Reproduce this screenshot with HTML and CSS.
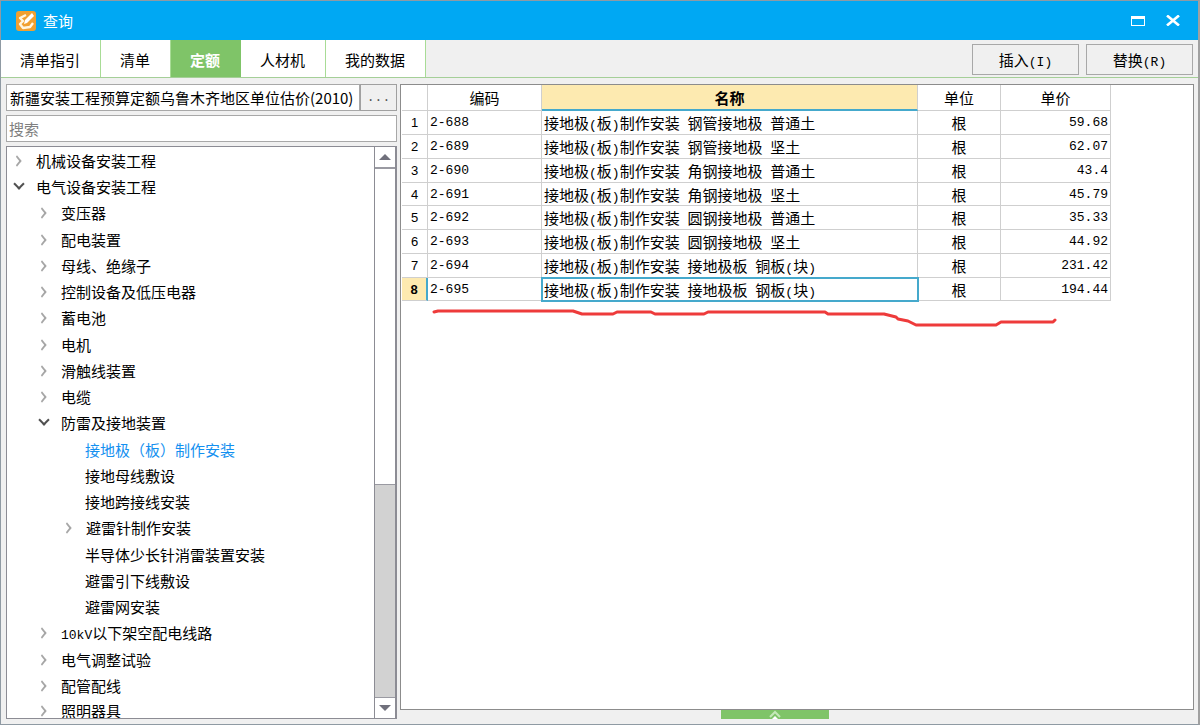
FILE: index.html
```html
<!DOCTYPE html>
<html lang="zh-CN">
<head>
<meta charset="utf-8">
<title>查询</title>
<link rel="stylesheet" href="styles.css">
</head>
<body>
<div class="window">
  <header class="titlebar">
    <svg class="logo" viewBox="0 0 20 20" aria-hidden="true">
      <rect width="20" height="20" rx="3" fill="#f0a030"/>
      <path d="M10 4L4 7l3 3-3 3 3 4 7-1 3-4" fill="none" stroke="#fff6e0" stroke-width="2.400" stroke-linejoin="round"/>
      <path d="M8 13l1-4 7-7 2 3-7 7z" fill="#fff"/>
    </svg>
    <h1 class="title">查询</h1>
    <button class="winbtn" aria-label="最大化"><svg width="14" height="10" viewBox="0 0 14 10"><path d="M0 0h14v10H0zM1 3v6h12V3z" fill="#fff" fill-rule="evenodd"/></svg></button>
    <button class="winbtn" aria-label="关闭"><svg width="14" height="11" viewBox="0 0 14 11"><path d="M1 .500l12 10M13 .500l-12 10" stroke="#fff" stroke-width="2.600"/></svg></button>
  </header>
  <nav class="tabs">
    <button class="tab">清单指引</button>
    <button class="tab">清单</button>
    <button class="tab active">定额</button>
    <button class="tab">人材机</button>
    <button class="tab wide">我的数据</button>
    <div class="actions">
      <button class="action">插入<span class="mono">(I)</span></button>
      <button class="action">替换<span class="mono">(R)</span></button>
    </div>
  </nav>
  <main class="content">
    <aside class="side">
      <div class="library">
        <input class="field" type="text" readonly aria-label="定额库" value="新疆安装工程预算定额乌鲁木齐地区单位估价(2010)">
        <button class="browse mono" aria-label="选择定额库">...</button>
      </div>
      <input class="search" type="text" placeholder="搜索" aria-label="搜索">
      <div class="treebox">
        <ul class="tree">
          <li class="closed">机械设备安装工程</li>
          <li class="open">电气设备安装工程</li>
          <li class="l2 closed">变压器</li>
          <li class="l2 closed">配电装置</li>
          <li class="l2 closed">母线、绝缘子</li>
          <li class="l2 closed">控制设备及低压电器</li>
          <li class="l2 closed">蓄电池</li>
          <li class="l2 closed">电机</li>
          <li class="l2 closed">滑触线装置</li>
          <li class="l2 closed">电缆</li>
          <li class="l2 open">防雷及接地装置</li>
          <li class="l3 current">接地极（板）制作安装</li>
          <li class="l3">接地母线敷设</li>
          <li class="l3">接地跨接线安装</li>
          <li class="l3 closed">避雷针制作安装</li>
          <li class="l3">半导体少长针消雷装置安装</li>
          <li class="l3">避雷引下线敷设</li>
          <li class="l3">避雷网安装</li>
          <li class="l2 closed"><span><span class="mono">10kV</span>以下架空配电线路</span></li>
          <li class="l2 closed">电气调整试验</li>
          <li class="l2 closed">配管配线</li>
          <li class="l2 closed">照明器具</li>
        </ul>
        <div class="scroll">
          <button class="arrow" aria-label="向上滚动"><svg width="12" height="6" viewBox="0 0 12 6"><path d="M0 6l6-6 6 6z" fill="#70707c"/></svg></button>
          <div class="track"><div class="thumb"></div></div>
          <button class="arrow down" aria-label="向下滚动"><svg width="12" height="6" viewBox="0 0 12 6"><path d="M0 0l6 6 6-6z" fill="#70707c"/></svg></button>
        </div>
      </div>
    </aside>
    <section class="right">
      <div class="gridbox">
        <table class="grid">
          <colgroup><col class="c-no"><col class="c-code"><col class="c-name"><col class="c-unit"><col class="c-price"></colgroup>
          <thead>
            <tr><th></th><th>编码</th><th class="sorted">名称</th><th>单位</th><th>单价</th></tr>
          </thead>
          <tbody>
            <tr><th>1</th><td class="mono">2-688</td><td>接地极<span class="mono">(</span>板<span class="mono">)</span>制作安装<span class="mono"> </span>钢管接地极<span class="mono"> </span>普通土</td><td class="unit">根</td><td class="price mono">59.68</td></tr>
            <tr><th>2</th><td class="mono">2-689</td><td>接地极<span class="mono">(</span>板<span class="mono">)</span>制作安装<span class="mono"> </span>钢管接地极<span class="mono"> </span>坚土</td><td class="unit">根</td><td class="price mono">62.07</td></tr>
            <tr><th>3</th><td class="mono">2-690</td><td>接地极<span class="mono">(</span>板<span class="mono">)</span>制作安装<span class="mono"> </span>角钢接地极<span class="mono"> </span>普通土</td><td class="unit">根</td><td class="price mono">43.4</td></tr>
            <tr><th>4</th><td class="mono">2-691</td><td>接地极<span class="mono">(</span>板<span class="mono">)</span>制作安装<span class="mono"> </span>角钢接地极<span class="mono"> </span>坚土</td><td class="unit">根</td><td class="price mono">45.79</td></tr>
            <tr><th>5</th><td class="mono">2-692</td><td>接地极<span class="mono">(</span>板<span class="mono">)</span>制作安装<span class="mono"> </span>圆钢接地极<span class="mono"> </span>普通土</td><td class="unit">根</td><td class="price mono">35.33</td></tr>
            <tr><th>6</th><td class="mono">2-693</td><td>接地极<span class="mono">(</span>板<span class="mono">)</span>制作安装<span class="mono"> </span>圆钢接地极<span class="mono"> </span>坚土</td><td class="unit">根</td><td class="price mono">44.92</td></tr>
            <tr><th>7</th><td class="mono">2-694</td><td>接地极<span class="mono">(</span>板<span class="mono">)</span>制作安装<span class="mono"> </span>接地极板<span class="mono"> </span>铜板<span class="mono">(</span>块<span class="mono">)</span></td><td class="unit">根</td><td class="price mono">231.42</td></tr>
            <tr class="selected"><th>8</th><td class="mono">2-695</td><td class="cell">接地极<span class="mono">(</span>板<span class="mono">)</span>制作安装<span class="mono"> </span>接地极板<span class="mono"> </span>钢板<span class="mono">(</span>块<span class="mono">)</span></td><td class="unit">根</td><td class="price mono">194.44</td></tr>
          </tbody>
        </table>
        <svg class="stroke" width="630" height="20" viewBox="430 308 630 20" aria-hidden="true">
          <path d="M434 312l4-1h135l9 3h31l4-2h34l4 2h49l4-2h117l3 2h56l12 3 2 2 10 2 8 4h80l5-3h52l2-2" fill="none" stroke="#ee3b3b" stroke-width="3" stroke-linecap="round" stroke-linejoin="round"/>
        </svg>
      </div>
      <button class="expand" aria-label="展开"><svg width="12" height="9" viewBox="0 0 12 9"><path d="M1 7l5-5 5 5" fill="none" stroke="#c5e8b8" stroke-width="2"/><path d="M3 9l3-3 3 3z" fill="#fff"/></svg></button>
    </section>
  </main>
</div>
</body>
</html>
```
FILE: styles.css
```css
*, *::before { box-sizing: border-box; }

body {
  margin: 0;
  font: 15px/20px "Noto Sans CJK SC", sans-serif;
  color: #000;
}

button, input {
  font: inherit;
  color: inherit;
  margin: 0;
  padding: 0;
  border-radius: 0;
}

.mono {
  font-family: "Liberation Mono", "Noto Sans CJK SC", monospace;
  font-size: 13px;
  white-space: pre;
}
span.mono { line-height: 1; }

.window {
  display: flex;
  flex-direction: column;
  height: 100vh;
  border: 1px solid #8f9aa3;
  border-right: 2px solid #a0a0a0;
  background: #f0f0f0;
}

.titlebar {
  display: flex;
  align-items: center;
  flex: none;
  height: 39px;
  padding: 0 8px 0 15px;
  background: #00a8f3;
  color: #fff;
}
.logo { width: 20px; height: 20px; }
.title { flex: 1; margin: 0 0 0 7px; font-size: 15px; font-weight: 400; }
.winbtn {
  display: flex;
  align-items: center;
  justify-content: center;
  width: 37px;
  height: 30px;
  border: 0;
  background: none;
}
.winbtn:last-child { width: 34px; }

.tabs {
  display: flex;
  flex: none;
  height: 38px;
  border-bottom: 1px solid #a5cf98;
}
.tab {
  padding: 3px 20px 0 19px;
  border: 0;
  border-right: 1px solid #a8dc96;
  background: #fff;
}
.tab.active {
  border-color: #7fc468;
  background: #7fc468;
  color: #fff;
  font-weight: 700;
}
.actions {
  display: flex;
  gap: 7px;
  margin: 4px 5px 2px auto;
}
.action {
  width: 107px;
  border: 1px solid #a8a8a8;
  background: #f0f0f0;
}

.content {
  display: flex;
  flex: 1;
  min-height: 0;
  gap: 3px;
  padding: 6px 4px 5px 5px;
}

.side {
  display: flex;
  flex-direction: column;
  flex: none;
  width: 391px;
  gap: 4px;
}
.library { display: flex; height: 27px; }
.field {
  flex: 1;
  min-width: 0;
  padding-left: 3px;
  border: 1px solid #a8a8a8;
  background: #fff;
}
.browse {
  width: 37px;
  border: 1px solid #a0a0a0;
  background: #f0f0f0;
  color: #555;
}
.search {
  height: 27px;
  padding-left: 2px;
  border: 1px solid #a8a8a8;
  background: #fff;
}
.search::placeholder { color: #808080; opacity: 1; }

.treebox {
  display: flex;
  flex: 1;
  min-height: 0;
  border: 1px solid #8c8c94;
}
.tree {
  flex: 1;
  margin: 0;
  padding: 1px 0 0;
  overflow: hidden;
  list-style: none;
  background: #fff;
}
.tree li {
  display: flex;
  align-items: center;
  height: 26px;
  padding-left: 6px;
}
.tree li:nth-child(4n) { height: 27px; }
.tree li:last-child { height: 24px; }
.tree .l2 { padding-left: 31px; }
.tree .l3 { padding-left: 56px; }
.tree .current { color: #1490f0; }
.tree li::before {
  content: "";
  flex: none;
  width: 8px;
  height: 8px;
  margin-right: 15px;
}
.tree .l3:not(.closed)::before { margin-right: 14px; }
.tree .closed::before {
  border: solid #a6a6a6;
  border-width: 2px 2px 0 0;
  transform: scaleX(.8) rotate(45deg);
}
.tree .open::before {
  margin-left: 2px;
  margin-right: 13px;
  margin-bottom: 6px;
  border: solid #505050;
  border-width: 0 2px 2px 0;
  transform: rotate(45deg);
}

.scroll {
  display: flex;
  flex-direction: column;
  width: 22px;
  border: solid #8c8c94;
  border-width: 0 1px;
  background: #d2d2d2;
}
.arrow {
  display: flex;
  align-items: center;
  justify-content: center;
  height: 21px;
  border: 0;
  border-bottom: 1px solid #9a9aa2;
  background: #fff;
}
.arrow.down { border-top: 1px solid #9a9aa2; border-bottom: 0; }
.track { flex: 1; }
.thumb {
  height: 60%;
  border: solid #9a9aa2;
  border-width: 1px 0;
  background: #fff;
}

.right {
  display: flex;
  flex-direction: column;
  flex: 1;
  min-width: 0;
}
.gridbox {
  position: relative;
  flex: 1;
  min-height: 0;
  overflow: hidden;
  padding-left: 1px;
  border: 1px solid #8c8c8c;
  background: #fff;
}
.grid {
  width: 709px;
  table-layout: fixed;
  border-collapse: separate;
  border-spacing: 0;
}
.c-no { width: 26px; }
.c-code { width: 114px; }
.c-name { width: 376px; }
.c-unit { width: 83px; }
.c-price { width: 110px; }
.grid th, .grid td {
  height: 24px;
  padding: 1px 2px 0;
  border: solid #cfcfcf;
  border-width: 0 1px 1px 0;
  line-height: 20px;
  text-align: left;
  white-space: nowrap;
}
.grid th { font-weight: 400; text-align: center; }
.grid thead th { height: 26px; }
.grid tbody tr:nth-child(4n) > * { height: 23px; }
.grid tbody th { font-family: "Liberation Sans", sans-serif; font-size: 13px; }
.grid .sorted {
  border-bottom: 2px solid #45a9cc;
  background: #fdeab0;
  font-weight: 700;
}
.grid .unit { text-align: center; }
.grid .price { text-align: right; }
.grid .selected th {
  border-right: 2px solid #45a9cc;
  background: #fdeab0;
  font-weight: 700;
}
.grid .cell { outline: 2px solid #45a9cc; outline-offset: -1px; }

.stroke {
  position: absolute;
  left: 29px;
  top: 223px;
}

.expand {
  display: flex;
  justify-content: center;
  align-self: center;
  flex: none;
  width: 108px;
  height: 9px;
  margin-right: 44px;
  border: 0;
  background: #7fc468;
}
```
